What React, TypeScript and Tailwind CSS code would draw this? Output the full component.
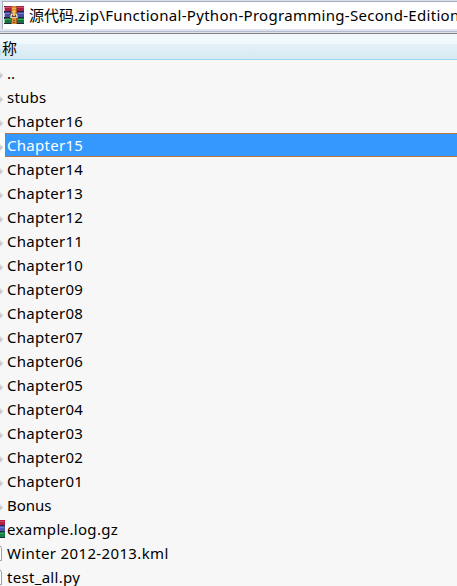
type EntryKind = 'folder' | 'archive' | 'file';

interface Entry {
  name: string;
  kind: EntryKind;
  tracking: string;
}

const chapters: Entry[] = Array.from({ length: 16 }, (_, i) => ({
  name: `Chapter${String(16 - i).padStart(2, '0')}`,
  kind: 'folder',
  tracking: 'tracking-[0.29px]',
}));

const entries: Entry[] = [
  { name: '..', kind: 'folder', tracking: 'tracking-[0.1px]' },
  { name: 'stubs', kind: 'folder', tracking: 'tracking-[0.2px]' },
  ...chapters,
  { name: 'Bonus', kind: 'folder', tracking: 'tracking-[0px]' },
  { name: 'example.log.gz', kind: 'archive', tracking: 'tracking-[0.33px]' },
  { name: 'Winter 2012-2013.kml', kind: 'file', tracking: 'tracking-[0.36px]' },
  { name: 'test_all.py', kind: 'file', tracking: 'tracking-[0.3px]' },
];

function ArchiveIcon() {
  return (
    <svg width="20" height="18" viewBox="0 0 20 18" className="shrink-0">
      <rect width="20" height="18" fill="#24243c" />
      <rect x="1" y="0" width="19" height="5" fill="#a72242" />
      <rect x="1" y="1" width="19" height="1" fill="#d34b67" />
      <rect x="1" y="6" width="19" height="5" fill="#454ca7" />
      <rect x="1" y="7" width="19" height="1" fill="#777bd0" />
      <rect x="1" y="12" width="19" height="5" fill="#17733c" />
      <rect x="1" y="13" width="19" height="1" fill="#38a35a" />
      <rect x="0" y="1" width="1" height="4" fill="#e2a4ae" />
      <rect x="0" y="7" width="1" height="4" fill="#b5b6dc" />
      <rect x="0" y="13" width="1" height="4" fill="#98c9a4" />
      <rect x="7" y="0" width="6" height="18" fill="#a8581c" />
      <rect x="8" y="0" width="4" height="18" fill="#dc8a32" />
      <path d="M8 2.5h4M8 5.5h4" stroke="#f0b45a" />
      <rect x="6" y="7" width="8" height="5" fill="#5f4336" />
      <path d="M7 12V9.5L8.5 7.5M13 12V9.5L11.5 7.5" fill="none" stroke="#ece6da" strokeWidth="1.3" />
      <rect x="9" y="4" width="2" height="6" fill="#f3bd58" />
      <path d="M7 11.5h6" stroke="#d9d2c6" />
      <path d="M9 14.5h2M9 16.5h2" stroke="#815021" />
    </svg>
  );
}

function EntryIcon({ kind }: { kind: EntryKind }) {
  if (kind === 'archive') {
    return (
      <svg width="5" height="18" viewBox="0 0 5 18">
        <rect width="5" height="18" fill="#282542" />
        <rect width="5" height="5" fill="#b51f45" />
        <rect y="6" width="5" height="5" fill="#5356b4" />
        <rect y="12" width="5" height="5" fill="#168044" />
        <path d="M0 1.5h4" stroke="#cf4361" />
        <path d="M0 7.5h4" stroke="#7678ce" />
        <path d="M0 13.5h4" stroke="#36a35d" />
      </svg>
    );
  }
  if (kind === 'file') {
    return (
      <svg width="5" height="18" viewBox="0 0 5 18">
        <path d="M-1 1.5H0L1.5 4v12.5H-1z" fill="#fdfdfd" stroke="#a0a0a0" />
      </svg>
    );
  }
  return (
    <svg width="5" height="18" viewBox="0 0 5 18">
      <path d="M0 8l3 2.5v1.5L0 15z" fill="#dedede" />
      <path d="M0 10.5l2.5.5L0 14z" fill="#c4c4c4" />
    </svg>
  );
}

function EntryRow({ entry, selected }: { entry: Entry; selected: boolean }) {
  return (
    <div className="flex h-6 shrink-0 items-center">
      <div className={`flex h-6 w-[5px] shrink-0 items-center ${selected ? 'bg-white' : ''}`}>
        <EntryIcon kind={entry.kind} />
      </div>
      <div
        className={`flex h-6 flex-1 items-center border border-r-0 pl-px ${
          selected ? 'border-dotted border-[#b8743c] bg-[#3399ff] text-white' : 'border-transparent'
        }`}
      >
        <span className={`whitespace-pre ${entry.tracking}`}>{entry.name}</span>
      </div>
    </div>
  );
}

export default function App() {
  return (
    <div className="flex h-[586px] w-[457px] flex-col overflow-hidden bg-[#f7f7f7] font-['Noto_Sans','Noto_Sans_CJK_SC',sans-serif] text-[15px] leading-6 text-black">
      <div className="flex h-[33px] shrink-0 flex-col bg-[#dee3ee]">
        <div className="h-px bg-[#d3dcec]" />
        <div className="ml-0.5 flex h-7 items-center border-l border-t border-[#a9adb7] bg-white pb-px pl-px">
          <ArchiveIcon />
          <span className="ml-[5px] shrink-0 whitespace-nowrap">源代码</span>
          <span className="whitespace-nowrap tracking-[0.3px]">
            .zip\Functional-Python-Programming-Second-Edition
          </span>
        </div>
        <div className="mt-0.5 h-px bg-[#b4bdd2]" />
      </div>
      <div className="h-px shrink-0 bg-[#808080]" />
      <div className="flex h-[26px] shrink-0 flex-col border-b border-[#97d8f2] bg-linear-to-b from-[#f1f8fd] from-40% via-[#e4f1f8] via-40% to-[#d6eaf4]">
        <span className="-ml-[13px] mt-0.5 whitespace-nowrap">名称</span>
      </div>
      <div className="mt-px flex flex-col">
        {entries.map((entry) => (
          <EntryRow key={entry.name} entry={entry} selected={entry.name === 'Chapter15'} />
        ))}
      </div>
    </div>
  );
}
